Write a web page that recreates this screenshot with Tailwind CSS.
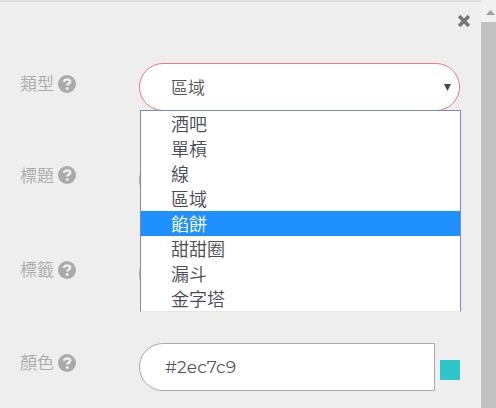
<!DOCTYPE html>
<html lang="zh-Hant">
  <head>
    <meta charset="UTF-8" />
    <title>圖表設定</title>
    <meta name="viewport" content="width=device-width, initial-scale=1.0" />
    <script src="https://cdn.jsdelivr.net/npm/@tailwindcss/browser@4"></script>
  </head>

  <body class="flex h-screen overflow-hidden bg-[#eeeeee] font-['Noto_Sans_CJK_TC',sans-serif] font-[350]">
    <!-- Help icon -->
    <svg class="hidden">
      <symbol id="help" viewBox="0 0 18 18">
        <circle cx="9" cy="9" r="9" fill="#aaaaaa" />
        <path d="M5.6 6.7C6.3 5.1 7.5 4.5 9.1 4.5c1.8 0 3.1.9 3.1 2.3 0 1.9-2.9 1.7-2.9 3.7" fill="none" stroke="#eeeeee" stroke-width="2.5" />
        <circle cx="9.2" cy="13.4" r="1.5" fill="#eeeeee" />
      </symbol>
    </svg>

    <main class="flex-1 border-t-2 border-[#dddddd]">
      <div class="flex h-[61px] justify-end pt-[13px] pr-[11px]">
        <button type="button" aria-label="關閉" class="size-3">
          <svg class="size-3" viewBox="0 0 12 12" fill="none" stroke="#777777" stroke-width="3.6">
            <path d="M1.1 1.1l9.8 9.8M10.9 1.1l-9.8 9.8" />
          </svg>
        </button>
      </div>

      <form class="flex flex-col gap-[45.33px] pr-5 pl-5 text-[17px] text-[#aaaaaa]">
        <div class="flex h-12">
          <label class="flex h-[42px] w-[119px] items-center gap-1">
            <span class="pb-0.5">類型</span> <svg class="size-[18px]"><use href="#help" /></svg>
          </label>
          <div class="relative flex-1">
            <div class="mr-px flex h-12 items-center justify-between rounded-full border border-[#e87c80] bg-white pr-2 pl-[31px] text-[#555555]">
              <span>區域</span>
              <svg class="size-[7px]" viewBox="0 0 7 7"><path d="M0 0h7L3.5 7z" fill="#444444" /></svg>
            </div>
            <!-- Open option list -->
            <ul class="absolute top-[47px] left-px z-10 w-[321px] border border-[#7290bb] border-b-[#e5e5e5] bg-white text-[18px] leading-[25px] text-[#4b4b55]">
              <li class="pl-[30px]">酒吧</li>
              <li class="pl-[30px]">單槓</li>
              <li class="pl-[30px]">線</li>
              <li class="pl-[30px]">區域</li>
              <li class="bg-[#1e90ff] pl-[30px] text-white">餡餅</li>
              <li class="pl-[30px]">甜甜圈</li>
              <li class="pl-[30px]">漏斗</li>
              <li class="pl-[30px]">金字塔</li>
            </ul>
          </div>
        </div>

        <div class="flex h-12">
          <label class="flex h-[38px] w-[119px] items-center gap-1">
            <span class="pb-0.5">標題</span> <svg class="size-[18px]"><use href="#help" /></svg>
          </label>
          <div class="h-12 flex-1 rounded-full border border-[#aaaaaa] bg-white"></div>
        </div>

        <div class="flex h-12">
          <label class="flex h-10 w-[119px] items-center gap-1">
            <span class="pb-0.5">標籤</span> <svg class="size-[18px]"><use href="#help" /></svg>
          </label>
          <div class="h-12 flex-1 rounded-full border border-[#aaaaaa] bg-white"></div>
        </div>

        <div class="flex h-12">
          <label class="flex h-10 w-[119px] items-center gap-1">
            <span class="pb-0.5">顏色</span> <svg class="size-[18px]"><use href="#help" /></svg>
          </label>
          <div class="flex h-12 w-[296px] items-center rounded-l-full border border-[#a9a9a9] bg-white pl-[25px] font-['Montserrat','Lato',sans-serif] text-[17px] font-normal text-[#555555]">
            <span class="pt-0.5 tracking-[0.2px]">#2ec7c9</span>
          </div>
          <div class="mt-[17px] ml-[5px] size-5 bg-[#2ec7c9]"></div>
        </div>
      </form>
    </main>

    <!-- Scrollbar -->
    <aside class="flex w-[15px] flex-col bg-[#f1f1f1]">
      <div class="flex h-[22px] justify-center pt-[10px]">
        <svg class="ml-1 h-[5px] w-[9px]" viewBox="0 0 9 5"><path d="M0 5L4.5 0 9 5z" fill="#a0a0a0" /></svg>
      </div>
      <div class="flex-1 bg-[#c1c1c1]"></div>
    </aside>
  </body>
</html>
